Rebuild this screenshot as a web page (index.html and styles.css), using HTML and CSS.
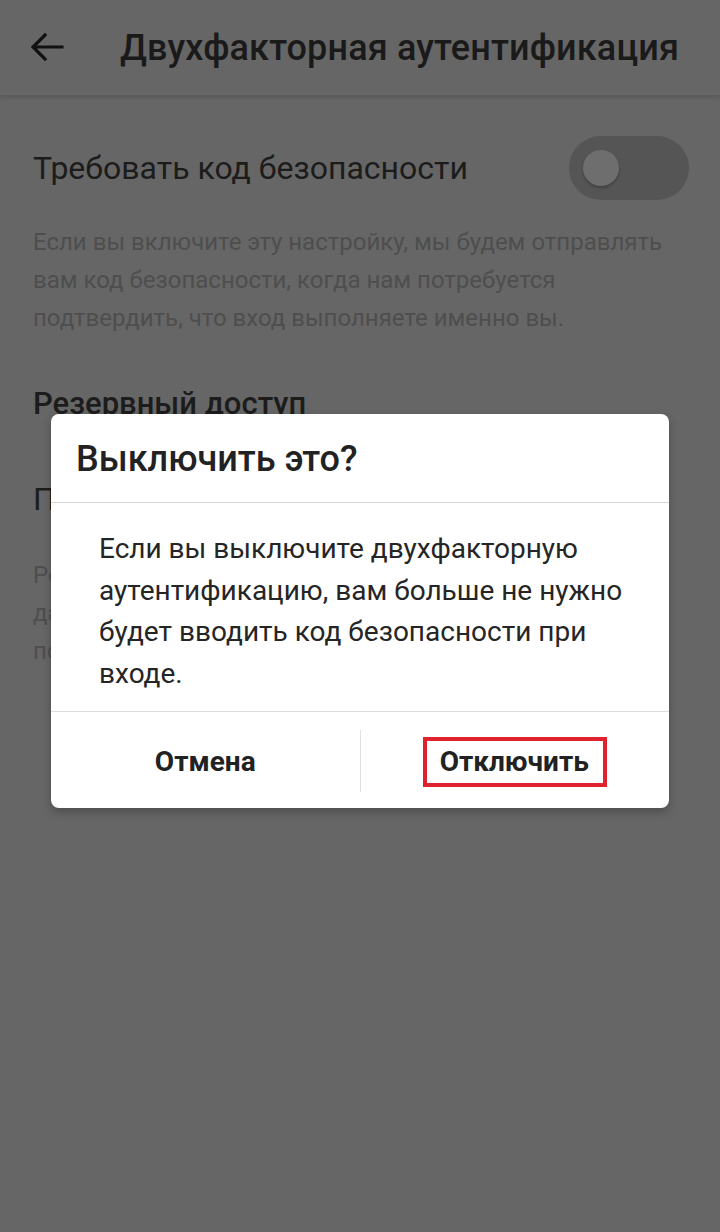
FILE: index.html
```html
<!DOCTYPE html>
<html lang="ru">
<head>
<meta charset="utf-8">
<link rel="stylesheet" href="styles.css">
</head>
<body>
<div class="screen">
  <header class="appbar">
    <svg class="back" width="36" height="36" viewBox="0 0 36 36"><path d="M33 18H5M16 6L4 18l12 12" fill="none" stroke="#111" stroke-width="3.2" stroke-linecap="square"/></svg>
    <h1 class="appbar-title">Двухфакторная аутентификация</h1>
  </header>
  <main class="content">
    <div class="setting-row">
      <span class="setting-label">Требовать код безопасности</span>
      <span class="toggle"><span class="knob"></span></span>
    </div>
    <p class="setting-desc">Если вы включите эту настройку, мы будем отправлять вам код безопасности, когда нам потребуется подтвердить, что вход выполняете именно вы.</p>
    <h2 class="section-title">Резервный доступ</h2>
    <div class="item-label">Получить резервные коды</div>
    <p class="setting-desc second">Резервные коды помогут вам войти в аккаунт,<br>даже если у вас не будет доступа к телефону,<br>после его потери или смены номера.</p>
  </main>

  <div class="dialog" role="dialog">
    <div class="dialog-title">Выключить это?</div>
    <div class="dialog-body">Если вы выключите двухфакторную аутентификацию, вам больше не нужно будет вводить код безопасности при входе.</div>
    <div class="dialog-actions">
      <button class="btn">Отмена</button>
      <span class="vdivider"></span>
      <button class="btn"><span class="highlight">Отключить</span></button>
    </div>
  </div>
</div>
</body>
</html>
```
FILE: styles.css
```css
html, body {
  margin: 0;
  padding: 0;
}
body {
  width: 720px;
  height: 1232px;
  background: #666666;
  font-family: Roboto, "Noto Sans", "Liberation Sans", sans-serif;
  overflow: hidden;
}
.screen {
  position: relative;
  width: 720px;
  height: 1232px;
}
.appbar {
  height: 96px;
  display: flex;
  align-items: center;
  padding-left: 29px;
  gap: 55px;
  border-bottom: 1px solid #5c5c5c;
  box-shadow: 0 2px 3px rgba(0,0,0,0.12);
  box-sizing: border-box;
}
.back {
  flex: none;
  margin-top: -1px;
}
.appbar-title {
  margin: 0;
  font-size: 36px;
  font-weight: 500;
  color: #1a1a1a;
  letter-spacing: 0.15px;
  white-space: nowrap;
}
.content {
  padding: 0 32px 0 33px;
}
.setting-row {
  display: flex;
  align-items: center;
  justify-content: space-between;
  height: 64px;
  margin-top: 40px;
}
.setting-label {
  font-size: 32px;
  color: #1c1c1c;
}
.toggle {
  position: relative;
  width: 120px;
  height: 64px;
  border-radius: 32px;
  background: #555555;
  margin-right: -1px;
  flex: none;
}
.knob {
  position: absolute;
  left: 14px;
  top: 14px;
  width: 36px;
  height: 36px;
  border-radius: 50%;
  background: #6e6e6e;
  box-shadow: 0 2px 3px rgba(0,0,0,0.25);
}
.setting-desc {
  margin: 23px 0 0;
  font-size: 24px;
  line-height: 38px;
  color: #4e4e4e;
}
.section-title {
  margin: 47px 0 0;
  font-size: 31px;
  font-weight: 500;
  color: #1c1c1c;
  line-height: 40px;
}
.item-label {
  margin-top: 56px;
  font-size: 32px;
  color: #1c1c1c;
}
.setting-desc.second {
  margin-top: 38px;
}
.dialog {
  position: absolute;
  left: 51px;
  top: 414px;
  width: 618px;
  background: #ffffff;
  border-radius: 8px;
  box-shadow: 0 4px 10px rgba(0,0,0,0.25);
  overflow: hidden;
}
.dialog-title {
  height: 89px;
  box-sizing: border-box;
  padding: 24px 0 0 25px;
  font-size: 36px;
  font-weight: 500;
  color: #222222;
  border-bottom: 1px solid #d4d4d4;
}
.dialog-body {
  padding: 25px 40px 17px 48px;
  font-size: 28px;
  line-height: 41.5px;
  color: #252525;
  border-bottom: 1px solid #dcdcdc;
}
.dialog-actions {
  display: flex;
  align-items: center;
  height: 96px;
}
.btn {
  flex: 1;
  border: none;
  background: none;
  padding: 0;
  font-family: inherit;
  font-size: 28px;
  font-weight: 700;
  color: #222222;
  display: flex;
  justify-content: center;
  align-items: center;
  margin-top: 3px;
}
.vdivider {
  width: 1px;
  height: 62px;
  background: #e0e0e0;
  margin-top: 2px;
}
.highlight {
  border: 4px solid #e0222e;
  padding: 4px 14px 5px 13px;
}
```
